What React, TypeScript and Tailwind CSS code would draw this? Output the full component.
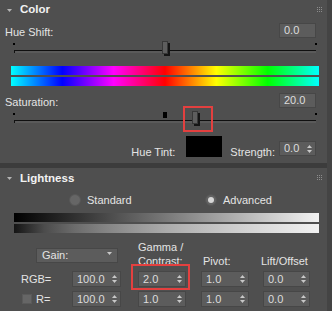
import React from "react";

function Dots() {
  const pts = [0, 2, 4];
  return (
    <svg width="5" height="5" viewBox="0 0 5 5" className="block">
      {pts.map((y) =>
        pts.map((x) => <rect key={`${x}-${y}`} x={x} y={y} width="1" height="1" fill="#8c8c8c" />)
      )}
    </svg>
  );
}

function Caret() {
  return (
    <svg width="5" height="3" viewBox="0 0 5 3" className="block">
      <polygon points="0,0 5,0 2.5,3" fill="#b4b4b4" />
    </svg>
  );
}

function Header({ title, shift }: { title: string; shift?: boolean }) {
  return (
    <div className="h-[19px] flex items-center pl-[7px] pr-[5px]">
      <div className={shift ? "mt-[2px]" : "mt-[1px]"}>
        <Caret />
      </div>
      <span
        className={`ml-[8px] font-bold text-[11.5px] leading-[13px] text-[#f2f2f2] ${shift ? "translate-y-[1px]" : ""}`}
      >
        {title}
      </span>
      <div className="ml-auto">
        <Dots />
      </div>
    </div>
  );
}

function Arrows() {
  return (
    <svg width="5" height="8" viewBox="0 0 5 8" className="block">
      <polygon points="0,3 2.5,0 5,3" fill="#c8c8c8" />
      <polygon points="0,5 5,5 2.5,8" fill="#c8c8c8" />
    </svg>
  );
}

function Spinner({ value, className, arrows }: { value: string; className: string; arrows?: boolean }) {
  return (
    <div
      className={`flex items-center justify-between bg-[#5c5c5c] border border-[#474747] pl-[4px] pr-[3px] ${className}`}
    >
      <span className="text-[#dcdcdc] text-[11px] leading-none">{value}</span>
      {arrows && <Arrows />}
    </div>
  );
}

function Slider({ thumb, mark }: { thumb: number; mark?: boolean }) {
  return (
    <div className="relative h-[28px]">
      <div className="absolute left-[13px] top-[5px] w-[2px] h-[2px] bg-black" />
      <div className="absolute left-[315px] top-[5px] w-[2px] h-[2px] bg-black" />
      {mark && <div className="absolute left-[163px] top-[4px] w-[4px] h-[6px] bg-black" />}
      <div className="absolute left-[14px] top-[12px] w-[302px] h-[3px] border-t border-l border-[#101010] bg-[#5a5a5a]" />
      <div
        className="absolute top-[3px] w-[6px] h-[13px] bg-[#5e5e5e] border border-[#383838] shadow-[2px_2px_0_0_#151515]"
        style={{ left: thumb }}
      />
    </div>
  );
}

const hue =
  "bg-[linear-gradient(to_right,#00ffff_0%,#0000ff_16.67%,#ff00ff_33.33%,#ff0000_50%,#ffff00_66.67%,#00ff00_83.33%,#00ffff_100%)]";

function ColorPanel() {
  return (
    <section className="relative h-[163px] bg-[#4f4f4f] flex flex-col">
      <Header title="Color" />
      <div className="mt-[4px] h-[15px] flex justify-between pl-[5px] pr-[11px]">
        <span className="leading-[15px] translate-y-[2px] text-[#e4e4e4]">Hue Shift:</span>
        <Spinner value="0.0" className="w-[37px] h-[15px]" />
      </div>
      <Slider thumb={162} />
      <div className={`ml-[11px] w-[308px] h-[9px] ${hue}`} />
      <div className={`mt-[2px] ml-[11px] w-[308px] h-[9px] ${hue}`} />
      <div className="mt-[7px] h-[15px] flex justify-between pl-[5px] pr-[11px]">
        <span className="leading-[15px] translate-y-[2px] text-[#e4e4e4]">Saturation:</span>
        <Spinner value="20.0" className="w-[37px] h-[15px]" />
      </div>
      <Slider thumb={192} mark />
      <div className="h-[21px] flex items-start justify-end pr-[11px]">
        <span className="mt-[10px] leading-[13px] text-[#e4e4e4]">Hue Tint:</span>
        <div className="ml-[11px] w-[36px] h-[21px] bg-black" />
        <span className="ml-[8px] mt-[10px] leading-[13px] text-[#e4e4e4]">Strength:</span>
        <Spinner value="0.0" arrows className="ml-[4px] mt-[5px] w-[37px] h-[15px]" />
      </div>
      <div className="absolute left-[183px] top-[106px] w-[30px] h-[26px] border-2 border-[#e3403f]" />
    </section>
  );
}

const gamma =
  "bg-[linear-gradient(to_right,#141414_0%,#4c4c4c_10%,#6c6c6c_20%,#848484_30%,#989898_40%,#ababab_50%,#bbbbbb_60%,#cacaca_70%,#d8d8d8_80%,#e5e5e5_90%,#f2f2f2_100%)]";

function LightnessPanel() {
  return (
    <section className="relative flex-1 bg-[#4f4f4f] flex flex-col text-[11px] text-[#e4e4e4]">
      <Header title="Lightness" shift />
      <div className="mt-[7px] h-[12px] flex items-center">
        <div className="ml-[69px] w-[136px] flex items-center">
          <div className="w-[12px] h-[12px] rounded-full bg-[#666666] border border-[#575757]" />
          <span className="ml-[6px] leading-[12px]">Standard</span>
        </div>
        <div className="flex items-center">
          <div className="w-[12px] h-[12px] rounded-full bg-[#626262] border border-[#555555] flex items-center justify-center">
            <div className="w-[6px] h-[6px] rounded-full bg-[#d6d6d6]" />
          </div>
          <span className="ml-[6px] leading-[12px]">Advanced</span>
        </div>
      </div>
      <div className="mt-[7px] ml-[14px] w-[305px] h-[9px] bg-[linear-gradient(to_right,#000000,#f2f2f2)]" />
      <div className={`mt-[2px] ml-[14px] w-[305px] h-[9px] ${gamma}`} />
      <div className="mt-[7px] grid grid-cols-[138px_63px_62px_1fr]">
        <div className="pt-[8px] pl-[36px]">
          <div className="w-[82px] h-[15px] bg-[#5c5c5c] border border-[#474747] flex items-start justify-between pl-[5px] pr-[5px]">
            <span className="leading-[13px]">Gain:</span>
            <div className="mt-[3px]">
              <svg width="5" height="3" viewBox="0 0 5 3" className="block">
                <polygon points="0,0 5,0 2.5,3" fill="#c8c8c8" />
              </svg>
            </div>
          </div>
        </div>
        <div className="leading-[14px]">
          <div>Gamma /</div>
          <div>Contrast:</div>
        </div>
        <div className="leading-[14px] pt-[14px] pl-[2px]">Pivot:</div>
        <div className="leading-[14px] pt-[14px] -ml-[2px]">Lift/Offset</div>
      </div>
      <div className="mt-[3px] grid grid-cols-[138px_63px_62px_1fr] h-[16px]">
        <div className="flex items-center pl-[21px]">
          <span className="w-[51px] leading-[16px]">RGB=</span>
          <Spinner value="100.0" arrows className="w-[49px] h-[16px]" />
        </div>
        <Spinner value="2.0" arrows className="w-[48px] h-[16px]" />
        <Spinner value="1.0" arrows className="w-[48px] h-[16px]" />
        <Spinner value="0.0" arrows className="w-[47px] h-[16px]" />
      </div>
      <div className="mt-[4px] grid grid-cols-[138px_63px_62px_1fr] h-[16px]">
        <div className="flex items-center pl-[22px]">
          <div className="w-[10px] h-[10px] bg-[#666666] border border-[#5a5a5a]" />
          <span className="ml-[4px] w-[36px] leading-[16px]">R=</span>
          <Spinner value="100.0" arrows className="w-[49px] h-[16px]" />
        </div>
        <Spinner value="1.0" arrows className="w-[48px] h-[16px]" />
        <Spinner value="1.0" arrows className="w-[48px] h-[16px]" />
        <Spinner value="0.0" arrows className="w-[47px] h-[16px]" />
      </div>
      <div className="absolute left-[131px] top-[96px] w-[59px] h-[26px] border-2 border-[#e3403f]" />
    </section>
  );
}

export default function App() {
  return (
    <div
      className="w-[332px] h-[311px] overflow-hidden bg-[#444444] flex text-[11px]"
      style={{ fontFamily: '"Liberation Sans", Arial, sans-serif' }}
    >
      <div className="w-[327px] h-[311px] flex flex-col gap-[5px] bg-[#3c3c3c]">
        <ColorPanel />
        <LightnessPanel />
      </div>
    </div>
  );
}
